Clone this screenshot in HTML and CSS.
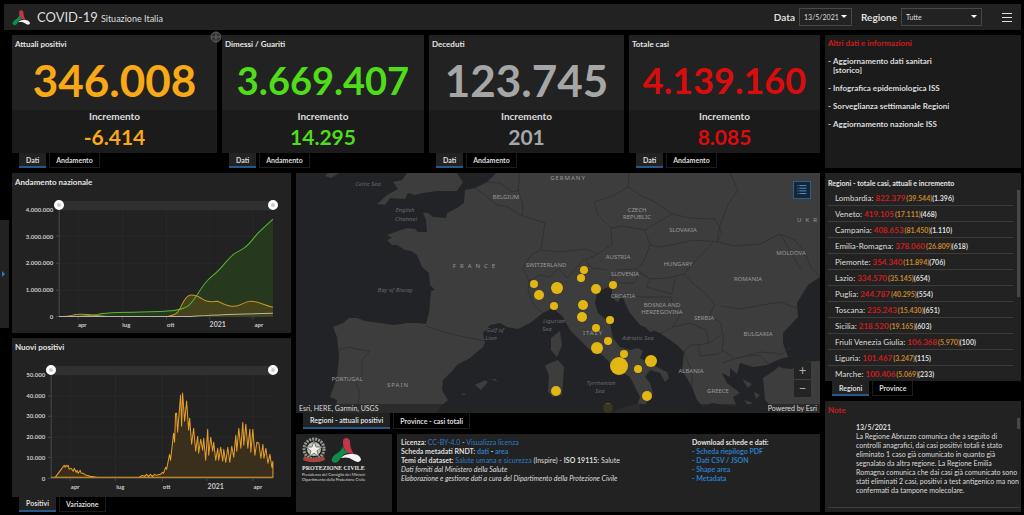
FILE: index.html
```html
<!DOCTYPE html>
<html lang="it">
<head>
    <meta charset="UTF-8">
    <meta name="viewport" content="width=device-width, initial-scale=1.0">
    <title>COVID-19 Situazione Italia</title>
    <link rel="stylesheet" href="styles.css">
</head>
<body>
    <svg class="defs" width="0" height="0" aria-hidden="true">
        <symbol id="logo" viewBox="0 0 30 26">
            <path d="M12 4c0-4 6-4 7 0 0 5 1 9 4 13-4 0-7-1-9-4-2-3-2-6-2-9z" fill="#c4354a"/>
            <path d="M12 9c1 4 3 6 6 7-4 0-7 2-9 6-2 4-6 5-8 2-1-3 2-6 4-7 4-2 6-5 7-8z" fill="#128a4a"/>
            <path d="M10 21c3-4 8-4 12-4 5 0 8 3 8 6-2 3-5 2-8 0-4-3-8-3-12-2z" fill="#f4f4f4"/>
        </symbol>
    </svg>

    <header class="header">
        <svg class="header-logo"><use href="#logo"/></svg>
        <h1>COVID-19</h1>
        <span class="subtitle">Situazione Italia</span>
        <div class="filters">
            <label for="data">Data</label>
            <div class="select select-date">
                <select id="data"><option>13/5/2021</option></select>
            </div>
            <label for="regione">Regione</label>
            <div class="select select-region">
                <select id="regione"><option>Tutte</option></select>
            </div>
            <button class="menu" aria-label="Menu"><i></i><i></i><i></i></button>
        </div>
    </header>

    <button class="drawer" aria-label="Apri pannello"></button>

    <main class="dashboard">
        <div class="main">
            <div class="cards">
                <section class="card orange">
                    <button class="expand" aria-label="Espandi">
                        <svg viewBox="0 0 12 12"><circle cx="6" cy="6" r="5"/><path d="M6 1v10M1 6h10"/></svg>
                    </button>
                    <div class="card-body">
                        <div class="card-top"><h2>Attuali positivi</h2><p class="total">346.008</p></div>
                        <div class="card-bottom"><h3>Incremento</h3><p class="delta">-6.414</p></div>
                    </div>
                    <div class="tabs"><button class="tab active">Dati</button><button class="tab">Andamento</button></div>
                </section>
                <section class="card green">
                    <div class="card-body">
                        <div class="card-top"><h2>Dimessi / Guariti</h2><p class="total long">3.669.407</p></div>
                        <div class="card-bottom"><h3>Incremento</h3><p class="delta">14.295</p></div>
                    </div>
                    <div class="tabs"><button class="tab active">Dati</button><button class="tab">Andamento</button></div>
                </section>
                <section class="card grey">
                    <div class="card-body">
                        <div class="card-top"><h2>Deceduti</h2><p class="total">123.745</p></div>
                        <div class="card-bottom"><h3>Incremento</h3><p class="delta">201</p></div>
                    </div>
                    <div class="tabs"><button class="tab active">Dati</button><button class="tab">Andamento</button></div>
                </section>
                <section class="card red">
                    <div class="card-body">
                        <div class="card-top"><h2>Totale casi</h2><p class="total million">4.139.160</p></div>
                        <div class="card-bottom"><h3>Incremento</h3><p class="delta">8.085</p></div>
                    </div>
                    <div class="tabs"><button class="tab active">Dati</button><button class="tab">Andamento</button></div>
                </section>
            </div>

            <div class="lower">
                <div class="charts">
                    <section class="panel chart">
                        <h2>Andamento nazionale</h2>
                        <div class="range range-trend">
                            <input type="range" value="0" aria-label="Inizio andamento">
                            <input type="range" value="100" aria-label="Fine andamento">
                        </div>
                        <svg class="plot" viewBox="12 210 278 123">
                            <path class="grid" d="M59 210H272M59 236H272M59 263H272M59 290H272M78 210V316M122 210V316M166 210V316M209 210V316M252 210V316"/>
                            <path class="axis" d="M59 210V316H272M56 236h3M56 263h3M56 290h3M56 316h3M78 316v3M122 316v3M166 316v3M209 316v3M252 316v3"/>
                            <path class="area-green" d="M59 316C72 316 88 316 97 314C107 311 150 312 163 311C174 310 180 310 187 306C195 300 199 288 207 280C211 276 213 275 217 271C222 266 226 260 233 254C237 251 239 251 243 248C248 245 252 239 257 233L272 219V316Z"/>
                            <path class="area-orange" d="M167 316C172 315 174 315 177 312C181 307 183 297 189 295C192 294 194 295 197 296C203 299 204 301 207 301C211 302 213 301 217 301C222 303 226 306 233 306C240 306 243 301 250 301C258 301 263 305 272 307V316Z"/>
                            <path class="line-green" d="M59 316C72 316 88 316 97 314C107 311 150 312 163 311C174 310 180 310 187 306C195 300 199 288 207 280C211 276 213 275 217 271C222 266 226 260 233 254C237 251 239 251 243 248C248 245 252 239 257 233L272 219"/>
                            <path class="line-orange" d="M59 316C71 317 71 314 78 314C90 313 95 316 107 316H167C172 315 174 315 177 312C181 307 183 297 189 295C192 294 194 295 197 296C203 299 204 301 207 301C211 302 213 301 217 301C222 303 226 306 233 306C240 306 243 301 250 301C258 301 263 305 272 307"/>
                            <path class="line-grey" d="M59 316H190C205 315 225 314 272 313"/>
                            <g class="ticks-y">
                                <text x="53" y="212">4.000.000</text><text x="53" y="239">3.000.000</text>
                                <text x="53" y="265">2.000.000</text><text x="53" y="292">1.000.000</text><text x="53" y="319">0</text>
                            </g>
                            <g class="ticks-x">
                                <text x="82" y="327">apr</text><text x="126" y="327">lug</text><text x="170" y="327">ott</text>
                                <text class="year" x="217" y="327">2021</text><text x="258" y="327">apr</text>
                            </g>
                        </svg>
                    </section>

                    <div class="tabbed">
                        <section class="panel chart">
                            <h2>Nuovi positivi</h2>
                            <div class="range range-new">
                                <input type="range" value="0" aria-label="Inizio nuovi positivi">
                                <input type="range" value="100" aria-label="Fine nuovi positivi">
                            </div>
                            <svg class="plot" viewBox="12 376 278 121">
                                <path class="grid" d="M51 376H272M51 397H272M51 417H272M51 438H272M51 458H272M70 376V479M115 376V479M162 376V479M206 376V479M252 376V479"/>
                                <path class="axis" d="M51 376V479H272M48 397h3M48 417h3M48 438h3M48 458h3M48 479h3M70 479v3M115 479v3M162 479v3M206 479v3M252 479v3"/>
                                <path class="daily" d="M51 478L55 478L58 474L61 470L64 466L65 468L66 466L67 467L68 466L69 470L71 469L73 472L74 469L76 473L77 471L78 474L80 471L81 474L83 474L86 476L90 477L97 478L130 478L138 478L142 476L144 477L146 475L148 477L150 475L152 477L154 475L156 476L160 475L162 473L163 474L165 468L166 470L168 460L169 455L170 461L172 443L173 434L174 443L175 414L176 414L177 433L180 396L181 427L182 394L184 422L186 402L188 431L189 419L191 445L193 429L195 452L197 437L198 454L200 440L202 451L203 439L205 461L207 430L208 456L210 438L212 452L213 443L215 461L217 449L218 461L220 448L222 462L223 450L225 463L227 448L229 463L231 447L233 458L235 436L236 452L238 429L240 449L242 423L243 446L245 425L247 449L249 430L250 453L252 430L254 456L256 443L258 444L260 459L262 445L263 459L265 449L267 464L269 455L271 468L272 462V478H51"/>
                                <g class="ticks-y">
                                    <text x="45" y="378">50.000</text><text x="45" y="399">40.000</text><text x="45" y="419">30.000</text>
                                    <text x="45" y="440">20.000</text><text x="45" y="461">10.000</text><text x="45" y="482">0</text>
                                </g>
                                <g class="ticks-x">
                                    <text x="75" y="490">apr</text><text x="120" y="490">lug</text><text x="166" y="490">ott</text>
                                    <text class="year" x="215" y="490">2021</text><text x="257" y="490">apr</text>
                                </g>
                            </svg>
                        </section>
                        <div class="tabs"><button class="tab active">Positivi</button><button class="tab">Variazione</button></div>
                    </div>
                </div>

                <div class="center">
                    <div class="map-block">
                        <section class="map">
                            <svg class="map-canvas" viewBox="296 173 524 240" preserveAspectRatio="xMidYMid slice">
                                <g class="land">
                                    <path d="M407 173L402 180L393 182L398 189L387 195L377 204L385 205L390 198L405 199L408 193L415 195L423 193L437 191L457 191L463 182L457 173Z"/>
                                    <path d="M325 176L331 178L339 173L328 173Z"/>
                                    <path d="M496 173L487 182L475 188L465 190L464 203L457 208L447 213L446 218L433 217L428 213L423 213L426 220L427 232L418 232L415 229L407 228L398 231L387 235L392 238L387 240L392 245L397 245L405 250L411 251L417 255L422 267L429 273L430 285L435 290L431 291L429 313L426 324L416 323L407 323L394 325L380 323L365 321L357 318L349 318L343 323L333 327L337 337L339 357L337 377L330 397L337 400L335 413H437L440 407L448 400L442 390L443 380L453 370L457 365L470 358L483 347L485 342L483 333L490 325L500 323L507 327L518 329L530 323L543 313L553 308L563 317L570 330L580 340L590 350L602 355L610 363L622 372L630 377L635 387L640 397L638 403L645 405L653 393L650 383L645 377L650 370L660 373L665 382L669 378L667 372L653 365L640 358L643 351L638 348L630 350L620 347L613 338L610 323L598 313L595 303L597 292L608 287L612 288L612 298L618 302L622 295L625 303L630 313L640 325L650 329L660 333L677 345L684 352L682 370L692 387L697 400L703 407L712 403L737 407L733 397L740 393L727 383L722 373L730 377L730 368L737 374L740 363L753 367L767 365L780 359L788 357L783 343L783 333L798 317L797 303L808 285L820 277V173Z"/>
                                    <path d="M763 378L775 370L782 363L800 362L820 361V413H777L765 400Z"/>
                                    <path d="M560 331L562 345L557 357L551 350L551 338Z"/>
                                    <path d="M550 363L558 360L564 367L562 395L553 397L548 392L549 375L545 366Z"/>
                                    <path d="M475 385L485 380L488 382L481 390ZM491 379L495 379L498 382ZM461 395L464 393L466 395ZM608 413L625 407L640 403L640 413ZM742 379L752 384L748 388ZM754 392L760 395L756 399ZM744 400L753 403L748 405ZM644 326L655 331L650 332Z"/>
                                </g>
                                <path class="islets" d="M776 365L786 361L800 364L792 369L782 368Z"/>
                                <path class="borders" d="M426 326L440 331L455 335L470 338L485 341M338 350L350 347L356 349L370 351L362 360L362 374L356 383L360 393L356 413M475 188L485 195L497 205L508 207L520 215L545 223L541 250L532 254L523 268L529 281L528 291L534 305L543 313M520 173L518 190L523 205L522 215M486 182L500 183L512 192L520 190M541 250L560 252L585 249L598 254L612 244L611 228L622 226L645 230L655 224L672 214L655 202L640 195L628 187L613 196L594 202L598 215L611 228M628 187L629 173M730 173L738 190L728 205L720 225L717 242L695 240L680 243L660 247L650 245L645 230M672 214L690 218L715 219L722 233L717 242M650 245L643 263L636 269L617 270L610 277L611 286M598 254L585 260L592 268L607 270M529 281L540 275L550 277L558 268L567 278L584 259M636 269L650 279L668 278L684 274L695 261L712 244M608 288L620 283L634 283L640 273L650 279L646 287L672 294L675 278M622 295L645 297L671 297L673 307L680 315L673 327L661 333M684 274L692 283L705 293L715 305L709 316L721 323L722 334L709 343L706 330L690 323L673 327M717 242L735 246L760 244L780 234L795 240L805 253L811 268L820 276M780 234L791 252L801 270M721 306L740 309L762 305L780 302L797 308M724 334L722 350L735 359L760 352L782 354L791 347M684 352L690 345L698 345L700 356L718 354L724 350M698 345L709 343M684 352L692 372L692 387M722 363L740 357L760 355L770 366"/>
                                <g class="places">
                                    <text class="wide" x="568" y="180">GERMANY</text><text x="506" y="199">BELGIUM</text>
                                    <text class="widest" x="476" y="268">FRANCE</text><text x="546" y="267">SWITZERLAND</text>
                                    <text x="618" y="259">AUSTRIA</text><text x="637" y="212">CZECH</text><text x="637" y="219">REPUBLIC</text>
                                    <text x="683" y="232">SLOVAKIA</text><text x="678" y="266">HUNGARY</text><text x="625" y="276">SLOVENIA</text>
                                    <text x="623" y="298">CROATIA</text><text x="662" y="307">BOSNIA AND</text><text x="662" y="314">HERZEGOVINA</text>
                                    <text x="704" y="320">SERBIA</text><text x="748" y="281">ROMANIA</text><text x="758" y="336">BULGARIA</text>
                                    <text x="791" y="255">MOLDOVA</text><text class="widest" x="809" y="222">UKR</text>
                                    <text x="691" y="373">ALBANIA</text><text x="718" y="393">GREECE</text><text class="wide" x="593" y="335">ITALY</text>
                                    <text class="wide" x="398" y="387">SPAIN</text><text x="347" y="381">PORTUGAL</text>
                                </g>
                                <g class="seas">
                                    <text x="368" y="186">Celtic Sea</text><text x="405" y="212">English</text><text x="406" y="221">Channel</text>
                                    <text x="395" y="292">Bay of Biscay</text><text x="495" y="332">Gulf of</text><text x="491" y="340">Lion</text>
                                    <text x="554" y="323">Ligurian</text><text x="547" y="331">Sea</text><text x="638" y="340">Adriatic Sea</text>
                                    <text x="601" y="385">Tyrrhenian</text><text x="600" y="393">Sea</text>
                                </g>
                                <g class="bubbles">
                                    <circle cx="534" cy="284" r="4"/><circle cx="539" cy="295" r="5"/><circle cx="557" cy="288" r="6"/>
                                    <circle cx="584" cy="270" r="4"/><circle cx="581" cy="278" r="4"/><circle cx="596" cy="289" r="5"/>
                                    <circle cx="613" cy="285" r="4"/><circle cx="554" cy="306" r="4"/><circle cx="583" cy="305" r="5"/>
                                    <circle cx="582" cy="317" r="5"/><circle cx="610" cy="320" r="4"/><circle cx="596" cy="328" r="4"/>
                                    <circle cx="608" cy="341" r="4"/><circle cx="597" cy="348" r="6"/><circle cx="624" cy="354" r="4"/>
                                    <circle cx="619" cy="366" r="9"/><circle cx="651" cy="361" r="6"/><circle cx="638" cy="369" r="4"/>
                                    <circle cx="647" cy="396" r="5"/><circle cx="556" cy="391" r="5"/><circle class="dim" cx="608" cy="408" r="5"/>
                                </g>
                            </svg>
                            <button class="legend" aria-label="Legenda">
                                <svg viewBox="0 0 18 18"><path d="M4 4h1M4 7h1M4 10h1M4 13h1M6 4h8M6 7h8M6 10h8M6 13h8"/></svg>
                            </button>
                            <div class="zoom"><button aria-label="Zoom avanti">+</button><button aria-label="Zoom indietro">−</button></div>
                            <div class="attribution"><span>Esri, HERE, Garmin, USGS</span><span>Powered by Esri</span></div>
                        </section>
                        <div class="tabs map-tabs"><button class="tab active">Regioni - attuali positivi</button><button class="tab">Province - casi totali</button></div>
                    </div>

                    <div class="credits">
                        <section class="panel agency">
                            <div class="agency-marks">
                                <svg viewBox="0 0 24 26">
                                    <circle cx="12" cy="12" r="10" fill="none" stroke="#8f9a8c" stroke-width="3" stroke-dasharray="2 1"/>
                                    <circle cx="12" cy="12" r="7" fill="#bfc0b8"/>
                                    <path d="M12 4l2 6h6l-5 4 2 6-5-4-5 4 2-6-5-4h6z" fill="#f0f0ea" stroke="#777" stroke-width="1"/>
                                    <path d="M2 19c6 3 14 3 20 0l1 4c-7 3-15 3-22 0z" fill="#a8443f"/>
                                </svg>
                                <svg><use href="#logo"/></svg>
                            </div>
                            <h2>PROTEZIONE CIVILE</h2>
                            <p>Presidenza del Consiglio dei Ministri</p>
                            <p>Dipartimento della Protezione Civile</p>
                        </section>
                        <section class="panel licence">
                            <div>
                                <p><b>Licenza:</b> <a href="#">CC-BY-4.0</a> - <a href="#">Visualizza licenza</a></p>
                                <p><b>Scheda metadati RNDT:</b> <b><a href="#">dati</a> - <a href="#">area</a></b></p>
                                <p><b>Temi del dataset:</b> <a href="#">Salute umana e sicurezza</a> (Inspire) - <b>ISO 19115:</b> Salute</p>
                                <p><em>Dati forniti dal Ministero della Salute</em></p>
                                <p><em>Elaborazione e gestione dati a cura del Dipartimento della Protezione Civile</em></p>
                            </div>
                            <div class="downloads">
                                <h2>Download schede e dati:</h2>
                                <p><a href="#">- Scheda riepilogo PDF</a></p>
                                <p><a href="#">- Dati CSV / JSON</a></p>
                                <p><a href="#">- Shape area</a></p>
                                <p><a href="#">- Metadata</a></p>
                            </div>
                        </section>
                    </div>
                </div>
            </div>
        </div>

        <aside class="side">
            <section class="panel links">
                <h2>Altri dati e informazioni</h2>
                <ul>
                    <li><a href="#">Aggiornamento dati sanitari<br>[storico]</a></li>
                    <li><a href="#">Infografica epidemiologica ISS</a></li>
                    <li><a href="#">Sorveglianza settimanale Regioni</a></li>
                    <li><a href="#">Aggiornamento nazionale ISS</a></li>
                </ul>
            </section>
            <div class="tabbed">
                <section class="panel regions">
                    <h2>Regioni - totale casi, attuali e incremento</h2>
                    <ul>
                        <li>Lombardia: <b>822.379</b><i>(39.544)</i><small>(1.396)</small></li>
                        <li>Veneto: <b>419.105</b><i>(17.111)</i><small>(468)</small></li>
                        <li>Campania: <b>408.653</b><i>(81.450)</i><small>(1.110)</small></li>
                        <li>Emilia-Romagna: <b>378.060</b><i>(26.809)</i><small>(618)</small></li>
                        <li>Piemonte: <b>354.340</b><i>(11.894)</i><small>(706)</small></li>
                        <li>Lazio: <b>334.570</b><i>(35.145)</i><small>(654)</small></li>
                        <li>Puglia: <b>244.787</b><i>(40.295)</i><small>(554)</small></li>
                        <li>Toscana: <b>235.243</b><i>(15.430)</i><small>(651)</small></li>
                        <li>Sicilia: <b>218.520</b><i>(19.165)</i><small>(603)</small></li>
                        <li>Friuli Venezia Giulia: <b>106.368</b><i>(5.970)</i><small>(100)</small></li>
                        <li>Liguria: <b>101.467</b><i>(3.247)</i><small>(115)</small></li>
                        <li>Marche: <b>100.406</b><i>(5.069)</i><small>(233)</small></li>
                    </ul>
                    <span class="scroll"></span>
                </section>
                <div class="tabs"><button class="tab active">Regioni</button><button class="tab">Province</button></div>
            </div>
            <section class="panel notes">
                <h2>Note</h2>
                <div class="note">
                    <h3>13/5/2021</h3>
                    <p>La Regione Abruzzo comunica che a seguito di controlli anagrafici, dai casi positivi totali è stato eliminato 1 caso già comunicato in quanto già segnalato da altra regione. La Regione Emilia Romagna comunica che dai casi già comunicato sono stati eliminati 2 casi, positivi a test antigenico ma non confermati da tampone molecolare.</p>
                </div>
                <span class="scroll"></span>
            </section>
        </aside>
    </main>
</body>
</html>
```
FILE: styles.css
```css
* {
    box-sizing: border-box;
}
body {
    margin: 0;
    min-height: 100vh;
    background: #000;
    color: #ddd;
    font-family: Lato, "Open Sans", sans-serif;
    font-size: 8px;
    line-height: 9px;
    display: flex;
    flex-direction: column;
}
h1, h2, h3, p, ul {
    margin: 0;
    padding: 0;
}
ul {
    list-style: none;
}
h2 {
    font-size: 8px;
    line-height: 10px;
    color: #e4e4e4;
}
button, select {
    font-family: inherit;
    color: inherit;
    border: 0;
    padding: 0;
    background: none;
}
button {
    cursor: pointer;
}
a {
    color: #2c7cc4;
    text-decoration: none;
}
.defs {
    position: absolute;
}

/* header */
.header {
    display: flex;
    align-items: center;
    height: 26px;
    margin: 4px 3px 5px 4px;
    padding: 0 9px 0 8px;
    background: #222;
}
.header-logo {
    width: 18px;
    height: 17px;
    margin-right: 7px;
}
.header h1 {
    font-size: 13px;
    line-height: 18px;
    font-weight: normal;
}
.subtitle {
    font-size: 9px;
    line-height: 12px;
    margin: 3px 0 0 3px;
}
.filters {
    display: flex;
    align-items: center;
    margin-left: auto;
}
.filters label {
    font-size: 10px;
    font-weight: bold;
    margin-right: 4px;
}
.select {
    position: relative;
    margin-right: 9px;
}
.select::after {
    content: "";
    position: absolute;
    right: 5px;
    top: 7px;
    border: 3px solid transparent;
    border-top-color: #fff;
    border-bottom: 0;
    pointer-events: none;
}
.select select {
    display: block;
    appearance: none;
    width: 100%;
    height: 18px;
    padding-left: 4px;
    border: 1px solid #484848;
    font-size: 7px;
}
.select-date {
    width: 53px;
}
.select-region {
    width: 81px;
    margin-right: 20px;
}
.menu i {
    display: block;
    width: 10px;
    height: 1px;
    margin: 3px 0;
    background: #ddd;
}
.drawer {
    position: absolute;
    left: 0;
    top: 220px;
    width: 9px;
    height: 108px;
    background: #222;
}
.drawer::after {
    content: "";
    display: block;
    margin-left: 2px;
    width: 0;
    border: 3px solid transparent;
    border-left-color: #2c7cc4;
    border-right: 0;
}

/* layout */
.dashboard {
    flex: 1;
    display: grid;
    grid-template-columns: 808fr 196fr;
    gap: 5px;
    padding: 0 3px 3px 12px;
}
.main, .center, .charts, .side {
    display: flex;
    flex-direction: column;
    gap: 5px;
    min-width: 0;
}
.cards {
    display: grid;
    grid-template-columns: 205fr 202fr 195fr 191fr;
    gap: 5px;
}
.lower {
    flex: 1;
    display: grid;
    grid-template-columns: 279fr 524fr;
    gap: 5px;
}
.panel {
    position: relative;
    background: #222;
}

/* indicator cards */
.card {
    position: relative;
    text-align: center;
}
.card-body {
    background: #1b1b1b;
}
.card-top {
    height: 75px;
    padding: 4px 3px;
    background: #222;
}
.card-top h2 {
    text-align: left;
}
.card-bottom {
    height: 43px;
}
.card h3 {
    font-size: 10px;
    line-height: 13px;
}
.total {
    font-size: 44px;
    line-height: 62px;
    font-weight: bold;
}
.total.long {
    font-size: 38px;
}
.total.million {
    font-size: 36px;
}
.delta {
    font-size: 21px;
    line-height: 28px;
    font-weight: bold;
}
.orange .total, .orange .delta { color: #f9a916; }
.green .total, .green .delta { color: #50dc18; }
.grey .total, .grey .delta { color: #a6a6a6; }
.red .total, .red .delta { color: #d90d0d; }
.expand {
    position: absolute;
    right: -5px;
    top: -4px;
    width: 12px;
    height: 12px;
}
.expand svg {
    display: block;
    fill: #333;
    stroke: #606060;
}

/* tabs */
.tabs {
    display: flex;
    gap: 3px;
    height: 15px;
    padding-left: 7px;
}
.tab {
    padding: 0 6px;
    border: 1px solid #1c1c1c;
    border-top: 0;
    font-size: 7px;
    font-weight: bold;
    line-height: 12px;
    white-space: nowrap;
}
.tab.active {
    padding: 0 7px;
    background: #222;
    border: 0;
    border-bottom: 2px solid #28578a;
}

/* charts */
.chart h2 {
    height: 28px;
    padding: 4px 3px;
}
.range {
    position: relative;
    height: 9px;
    margin-right: 18px;
    background: #303030;
}
.range-trend {
    margin-left: 47px;
}
.range-new {
    margin-left: 39px;
}
.range input {
    position: absolute;
    left: -5px;
    top: -1px;
    width: calc(100% + 10px);
    height: 10px;
    margin: 0;
    appearance: none;
    background: none;
    pointer-events: none;
}
.range input::-webkit-slider-thumb {
    appearance: none;
    width: 10px;
    height: 10px;
    border-radius: 50%;
    border: 3px solid #fff;
    background: #ccc;
    pointer-events: auto;
}
.plot {
    display: block;
    width: 100%;
    overflow: visible;
    fill: none;
}
.plot text {
    fill: #ccc;
    font-size: 6px;
    font-weight: bold;
}
.ticks-y {
    text-anchor: end;
}
.ticks-x {
    text-anchor: middle;
}
.plot .year {
    font-size: 7px;
}
.grid { stroke: #292929; }
.axis { stroke: #484848; }
.area-green { fill: #26391f; }
.area-orange { fill: #44431b; }
.line-green { stroke: #54b832; }
.line-orange { stroke: #c8922c; }
.line-grey { stroke: #b5b5a5; }
.daily {
    fill: #3a2f1c;
    stroke: #e6a02c;
    stroke-linejoin: round;
}

/* map */
.map {
    position: relative;
    height: 240px;
    overflow: hidden;
    background: #212326;
}
.map-canvas {
    display: block;
    width: 100%;
    height: 100%;
}
.land { fill: #3d3d3d; }
.islets { fill: #212326; }
.borders {
    fill: none;
    stroke: #303132;
}
.map-canvas text {
    font-family: "Noto Sans", sans-serif;
    font-size: 6px;
    text-anchor: middle;
    fill: #999;
}
.map-canvas .seas text {
    fill: #66696c;
    font-style: italic;
}
.map-canvas .wide {
    letter-spacing: 1px;
}
.map-canvas .widest {
    letter-spacing: 4px;
}
.bubbles { fill: #e3b713; }
.dim { opacity: 0.4; }
.legend {
    position: absolute;
    right: 9px;
    top: 8px;
    width: 18px;
    height: 18px;
    background: #152638;
    border: 1px solid #28608f;
}
.legend svg {
    display: block;
    width: 100%;
    height: 100%;
    stroke: #4d9ad8;
}
.zoom {
    position: absolute;
    right: 9px;
    bottom: 16px;
    display: grid;
    gap: 1px;
}
.zoom button {
    width: 17px;
    height: 17px;
    background: #242424;
    font-size: 13px;
    line-height: 15px;
    color: #aaa;
}
.attribution {
    position: absolute;
    left: 0;
    right: 0;
    bottom: 0;
    display: flex;
    justify-content: space-between;
    padding: 0 3px;
    background: rgba(36, 36, 36, 0.7);
    font-size: 7px;
}
.map-tabs {
    height: 16px;
}

/* credits */
.credits {
    flex: 1;
    display: grid;
    grid-template-columns: 96fr 423fr;
    gap: 5px;
}
.agency {
    padding: 3px 6px;
    font-size: 4px;
    line-height: 5px;
}
.agency-marks {
    display: flex;
    gap: 5px;
    height: 27px;
}
.agency-marks svg {
    width: 24px;
    height: 26px;
}
.agency-marks svg + svg {
    width: 30px;
}
.agency h2 {
    font-family: "Liberation Serif", serif;
    font-size: 6px;
    line-height: 8px;
    white-space: nowrap;
}
.licence {
    display: flex;
    justify-content: space-between;
    padding: 4px;
    font-size: 7px;
}
.licence h2 {
    font-size: 7px;
    line-height: 9px;
}
.downloads {
    width: 124px;
    font-weight: bold;
}

/* side column */
.links {
    height: 133px;
    padding: 3px;
    background: #1b1b1b;
}
.links h2, .notes h2 {
    color: #d01c1c;
}
.links ul {
    padding-top: 9px;
    font-weight: bold;
}
.links li {
    display: flex;
    margin-bottom: 9px;
}
.links li::before {
    content: "-";
    margin-right: 2px;
}
.links a {
    color: #ddd;
}
.regions {
    height: 208px;
    overflow: hidden;
    padding: 3px;
}
.regions h2 {
    font-size: 7px;
    line-height: 14px;
}
.regions ul {
    margin-right: 5px;
}
.regions li {
    height: 16px;
    padding-left: 7px;
    border-bottom: 1px solid #3c3c3c;
    line-height: 17px;
    white-space: nowrap;
}
.regions li b {
    color: #d01c1c;
    margin-right: 1px;
}
.regions li i, .regions li small {
    font-size: 7px;
    font-style: normal;
    font-weight: bold;
}
.regions li i {
    color: #c8862a;
}
.scroll {
    position: absolute;
    right: 1px;
    top: 17px;
    width: 3px;
    height: 107px;
    background: #484848;
}
.notes {
    flex: 1;
    padding: 4px 1px 4px 3px;
}
.notes .scroll {
    height: 11px;
}
.note {
    margin-top: 8px;
    padding: 0 0 12px 28px;
    border-bottom: 1px solid #3c3c3c;
    font-size: 7px;
}
.note h3 {
    font-size: 7px;
    line-height: 9px;
}
```
